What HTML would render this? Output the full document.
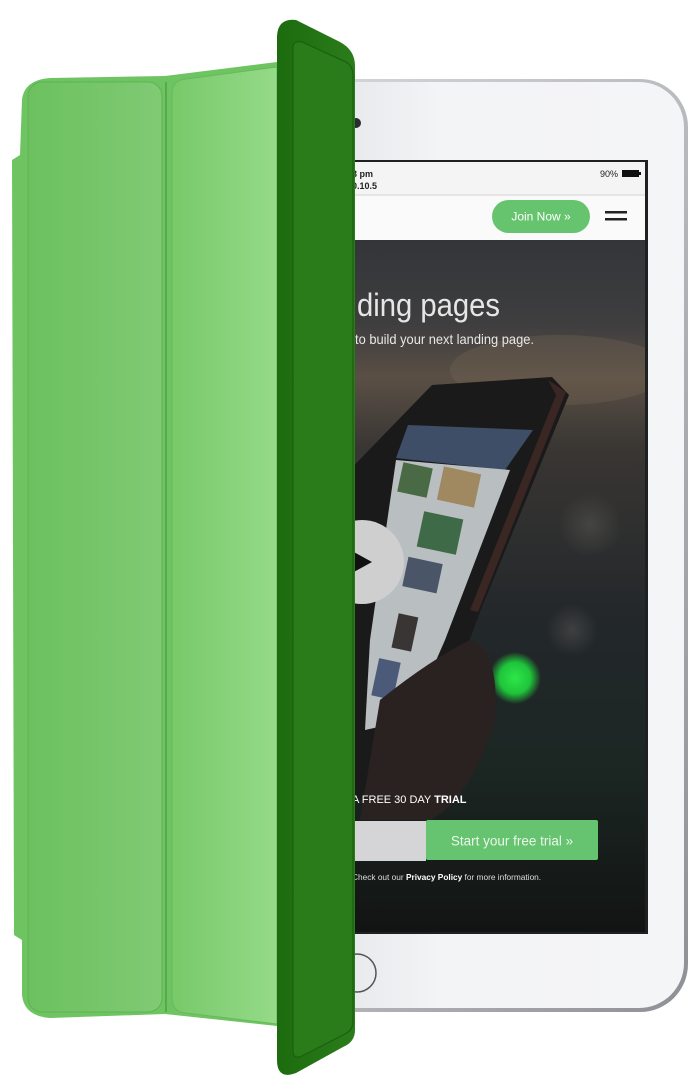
<!DOCTYPE html>
<html><head><meta charset="utf-8"><style>
html,body{margin:0;padding:0;background:#fff;width:700px;height:1090px;overflow:hidden}
svg{display:block}
text{font-family:"Liberation Sans",sans-serif}
</style></head><body>
<svg width="700" height="1090" viewBox="0 0 700 1090" xmlns="http://www.w3.org/2000/svg">
<defs>
<linearGradient id="ipadEdge" x1="0" y1="0" x2="1" y2="1">
<stop offset="0" stop-color="#d8d9dc"/><stop offset="0.5" stop-color="#b9bbbf"/><stop offset="1" stop-color="#8e9095"/>
</linearGradient>
<linearGradient id="body" x1="0" y1="0" x2="1" y2="0">
<stop offset="0" stop-color="#e0e1e4"/><stop offset="0.4" stop-color="#f3f4f6"/><stop offset="1" stop-color="#f4f5f7"/>
</linearGradient>
<linearGradient id="hero" x1="0" y1="0" x2="0" y2="1">
<stop offset="0" stop-color="#333539"/><stop offset="0.12" stop-color="#3e3e3f"/><stop offset="0.2" stop-color="#5a4f45"/><stop offset="0.3" stop-color="#393633"/><stop offset="0.55" stop-color="#23272a"/><stop offset="0.75" stop-color="#1c2724"/><stop offset="1" stop-color="#121413"/>
</linearGradient>
<radialGradient id="glow" cx="0.5" cy="0.5" r="0.5"><stop offset="0" stop-color="#2ee64a"/><stop offset="0.6" stop-color="#1fc43a"/><stop offset="1" stop-color="#1fc43a" stop-opacity="0"/></radialGradient>
<radialGradient id="bok" cx="0.5" cy="0.5" r="0.5"><stop offset="0" stop-color="#5a5a56" stop-opacity="0.5"/><stop offset="1" stop-color="#5a5a56" stop-opacity="0"/></radialGradient>
<linearGradient id="p1" x1="0" y1="0" x2="1" y2="0"><stop offset="0" stop-color="#6cc15e"/><stop offset="1" stop-color="#80ca74"/></linearGradient>
<linearGradient id="p2" x1="0" y1="0" x2="1" y2="0"><stop offset="0" stop-color="#78c96a"/><stop offset="1" stop-color="#95da88"/></linearGradient>
<linearGradient id="flap" x1="0" y1="0" x2="1" y2="0"><stop offset="0" stop-color="#1c6c0f"/><stop offset="1" stop-color="#2b7c1a"/></linearGradient>
<clipPath id="scr"><rect x="300" y="162" width="345" height="770"/></clipPath>
</defs>

<rect x="274" y="79" width="414" height="933" rx="48" fill="url(#ipadEdge)"/>
<rect x="277" y="82" width="407" height="926" rx="45" fill="url(#body)"/>
<circle cx="356" cy="123" r="5" fill="#2a2c30"/>
<rect x="300" y="160" width="348" height="774" fill="#1f2022"/>
<g clip-path="url(#scr)">
<rect x="300" y="162" width="345" height="34" fill="#f4f4f5"/>
<line x1="300" y1="195" x2="645" y2="195" fill="none" stroke="#d6d6d6"/>
<rect x="300" y="196" width="345" height="44" fill="#fafafa"/>
<text x="352" y="177" font-size="9" font-weight="bold" fill="#222">3 pm</text>
<text x="352" y="189" font-size="9" font-weight="bold" fill="#222">0.10.5</text>
<text x="600" y="177" font-size="9" fill="#222">90%</text>
<rect x="622" y="170" width="17" height="7" fill="#111"/><rect x="639" y="172" width="2" height="3" fill="#111"/>
<rect x="492" y="200" width="98" height="33" rx="16.5" fill="#67c46e"/>
<text x="541" y="220.5" font-size="12" fill="#fff" text-anchor="middle">Join Now »</text>
<rect x="605" y="211" width="22" height="2.5" fill="#222"/><rect x="605" y="218" width="22" height="2.5" fill="#222"/>
<rect x="300" y="240" width="345" height="692" fill="url(#hero)"/>
<ellipse cx="560" cy="370" rx="110" ry="35" fill="#7a6a55" opacity="0.3"/>
<circle cx="590" cy="525" r="32" fill="url(#bok)"/>
<circle cx="572" cy="630" r="26" fill="url(#bok)"/>
<circle cx="515" cy="678" r="26" fill="url(#glow)"/>
<polygon points="340,480 432,385 552,377 569,395 480,612 440,720 420,800 340,800" fill="#1b1a1a"/>
<polygon points="548,380 566,392 478,612 470,610 556,395" fill="#3a2622"/>
<polygon points="408,425 533,430 505,470 396,458" fill="#3d4e66"/>
<polygon points="396,460 510,470 445,640 410,720 365,730 370,640" fill="#b9bec0"/>
<rect x="400" y="465" width="30" height="30" fill="#4a6a45" transform="rotate(12 415 480)"/>
<rect x="440" y="470" width="38" height="34" fill="#a08860" transform="rotate(12 459 487)"/>
<rect x="420" y="515" width="40" height="36" fill="#3f6a48" transform="rotate(12 440 533)"/>
<rect x="405" y="560" width="35" height="30" fill="#4a5568" transform="rotate(12 422 575)"/>
<rect x="395" y="615" width="20" height="35" fill="#3a3535" transform="rotate(12 405 632)"/>
<rect x="375" y="660" width="22" height="38" fill="#4a5a78" transform="rotate(12 386 679)"/>
<path d="M380,700 Q430,660 470,640 Q500,650 495,720 Q470,800 430,820 L360,820 Z" fill="#2a2220"/>
<circle cx="362" cy="562" r="42" fill="#cfcfd0"/>
<polygon points="352,551 372,562 352,573" fill="#111"/>
<text x="352" y="803" font-size="11" fill="#fff">A FREE 30 DAY <tspan font-weight="bold">TRIAL</tspan></text>
<rect x="300" y="821" width="126" height="40" fill="#d5d5d7"/>
<rect x="426" y="820" width="172" height="40" rx="2" fill="#66c36f"/>
<text x="512" y="845.5" font-size="13.5" fill="#eaf7eb" text-anchor="middle">Start your free trial »</text>
<text x="352" y="880" font-size="8.3" fill="#ddd">Check out our <tspan font-weight="bold" fill="#fff">Privacy Policy</tspan> for more information.</text>
<text x="357" y="316" font-size="32" fill="#e6e6e6" textLength="143" lengthAdjust="spacingAndGlyphs">ding pages</text>
<text x="355" y="344" font-size="14" fill="#e8e8e8" textLength="179" lengthAdjust="spacingAndGlyphs">to build your next landing page.</text>
</g>
<circle cx="357" cy="973" r="19" fill="none" stroke="#555" stroke-width="1.5"/>

<path d="M20,155 L22,100 Q24,80 50,78 L165,76 L277,62 L277,1026 L165,1014 L50,1018 Q24,1016 22,995 L22,940 L14,935 L12,160 Z" fill="#6ec461"/>
<rect x="28" y="82" width="134" height="930" rx="14" fill="url(#p1)" stroke="#5fb255" stroke-width="1"/>
<path d="M172,94 Q172,80 186,79 L277,67 L277,1024 L186,1013 Q172,1012 172,998 Z" fill="url(#p2)" stroke="#68b95c" stroke-width="1"/>
<line x1="166" y1="82" x2="166" y2="1012" fill="none" stroke="#5aa84e" stroke-width="2"/>

<path d="M277,36 Q278,18 296,20 L340,42 Q355,50 355,66 L355,1030 Q355,1042 343,1047 L296,1073 Q277,1080 277,1060 Z" fill="url(#flap)"/>
<path d="M293,48 Q293,40 302,42 L346,62 Q353,66 353,76 L353,1022 Q353,1030 345,1034 L302,1056 Q293,1060 293,1050 Z" fill="#2a7b1a" stroke="#1a600e" stroke-width="1.2"/>
</svg>
</body></html>
